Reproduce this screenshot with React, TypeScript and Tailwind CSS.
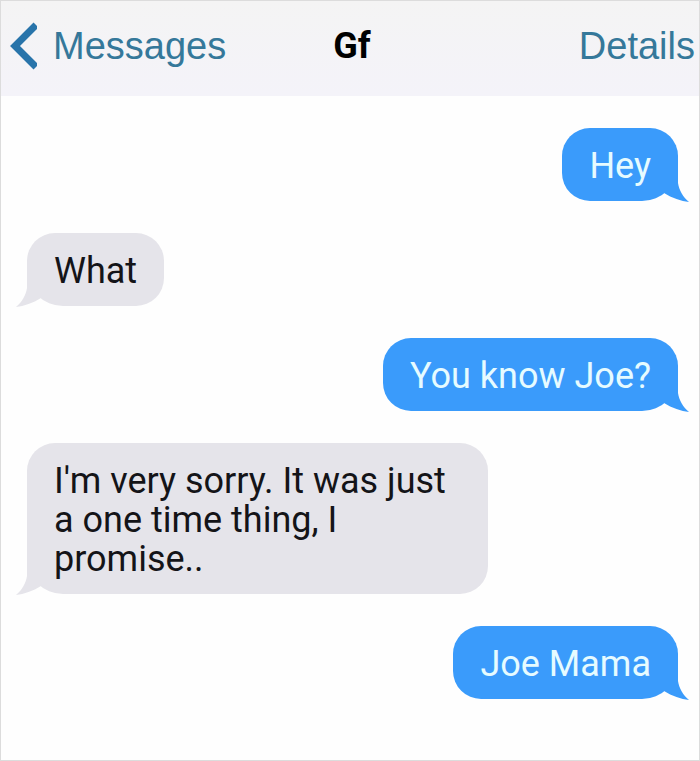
import type { ReactNode } from "react";

type Message = { id: number; mine: boolean; text: string };

const messages: Message[] = [
  { id: 1, mine: true, text: "Hey" },
  { id: 2, mine: false, text: "What" },
  { id: 3, mine: true, text: "You know Joe?" },
  { id: 4, mine: false, text: "I'm very sorry. It was just a one time thing, I promise.." },
  { id: 5, mine: true, text: "Joe Mama" },
];

function Bubble({ mine, children }: { mine: boolean; children: ReactNode }) {
  return (
    <li
      className={
        mine
          ? "relative max-w-[461px] self-end rounded-[28px] rounded-br-[36px] bg-[#3a9bfb] px-[27px] pt-[19px] pb-[15px] text-[#e6fbff]"
          : "relative max-w-[461px] self-start rounded-[28px] rounded-bl-[36px] bg-[#e5e4ea] px-[27px] pt-[19px] pb-[15px] text-[#141418]"
      }
    >
      {children}
      <svg
        aria-hidden="true"
        viewBox="0 0 40 40"
        className={
          mine
            ? "absolute -right-3 -bottom-px size-10 fill-[#3a9bfb]"
            : "absolute -left-3 -bottom-px size-10 -scale-x-100 fill-[#e5e4ea]"
        }
      >
        <path d="M28 0V21C29 28 33 35 39 40C31 39 22 36 14 31L4 34V0Z" />
      </svg>
    </li>
  );
}

export default function App() {
  return (
    <div className="flex min-h-screen flex-col border border-[#dcdcdc] bg-[#fefefe] font-['Roboto','Liberation_Sans',sans-serif]">
      <header className="grid grid-cols-[1fr_auto_1fr] items-center bg-linear-to-b from-[#f4f4f4] to-[#f4f3f9] pt-[21px] pr-1 pb-[26px] pl-2 text-[38px] leading-[46px] text-[#35789a]">
        <button type="button" className="flex items-center gap-4 justify-self-start font-['Liberation_Sans',sans-serif]">
          <svg aria-hidden="true" viewBox="0 0 28 48" className="h-12 w-7 fill-none stroke-[#2874aa] stroke-[7]">
            <path d="M27 3L6 24L27 45" />
          </svg>
          Messages
        </button>
        <h1 className="text-[36px] font-bold text-black">Gf</h1>
        <button type="button" className="justify-self-end font-['Liberation_Sans',sans-serif]">
          Details
        </button>
      </header>
      <main className="pt-8 pr-[21px] pb-14 pl-[26px]">
        <ul className="flex flex-col gap-8 text-[36px] leading-[39px]">
          {messages.map((message) => (
            <Bubble key={message.id} mine={message.mine}>
              {message.text}
            </Bubble>
          ))}
        </ul>
      </main>
    </div>
  );
}
